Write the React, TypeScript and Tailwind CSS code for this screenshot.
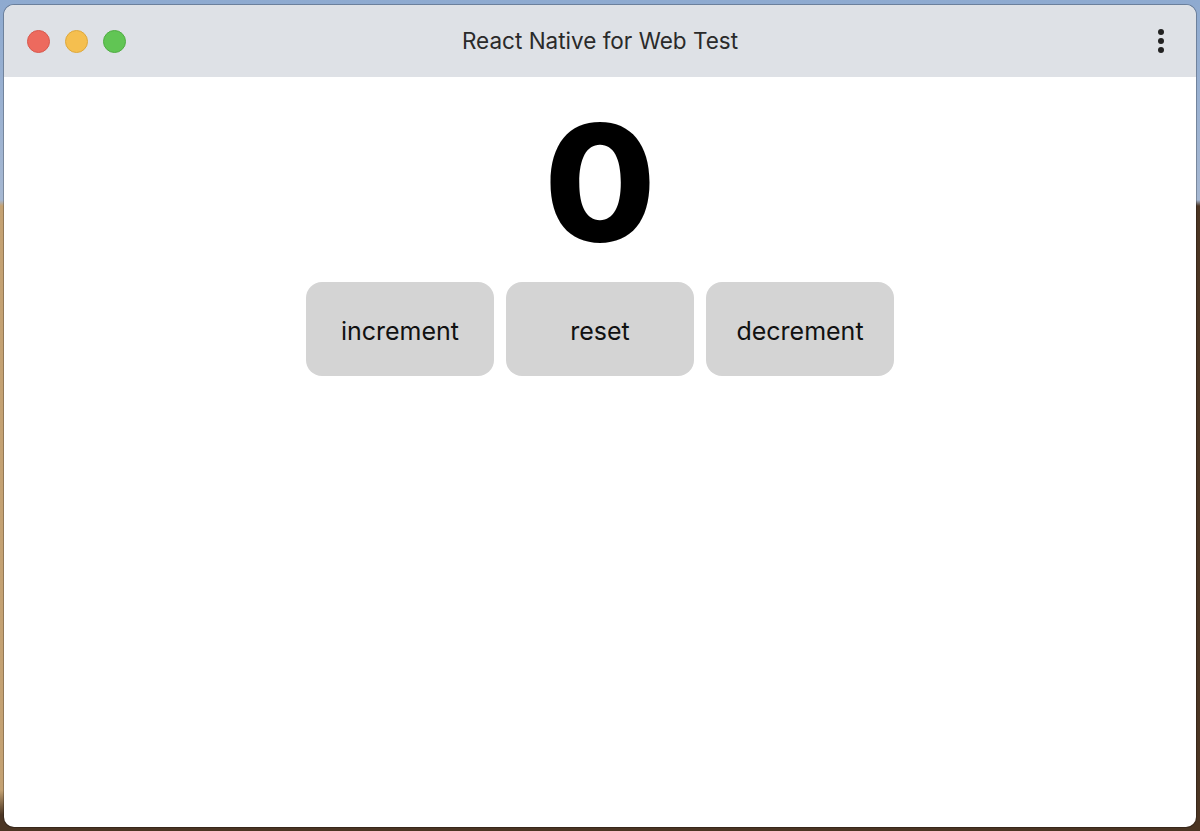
import React, { useState } from 'react';

const TrafficLights: React.FC = () => (
  <div className="flex items-center gap-[15px]">
    <span className="w-[23px] h-[23px] rounded-full bg-[#ed6a5e] border border-[#d8584d]" />
    <span className="w-[23px] h-[23px] rounded-full bg-[#f5bf4f] border border-[#dea83b]" />
    <span className="w-[23px] h-[23px] rounded-full bg-[#61c554] border border-[#50ad43]" />
  </div>
);

const CounterButton: React.FC<{ label: string; onPress: () => void }> = ({ label, onPress }) => (
  <button
    onClick={onPress}
    className="w-[188px] h-[94px] rounded-[16px] bg-[#d4d4d4] text-[25px] text-[#111] flex items-center justify-center pt-[5px]"
  >
    {label}
  </button>
);

export default function App() {
  const [count, setCount] = useState(0);

  return (
    <div className="w-[1200px] h-[831px] overflow-hidden pt-[5px] px-[4px] pb-[4px] bg-[linear-gradient(to_bottom,#8eaad0_0px,#a6b8d2_200px,transparent_206px,transparent_790px,#4b3523_815px),linear-gradient(to_right,#c4a273_0%,#8a6a48_40%,#4b3523_100%)]">
      <div className="h-full flex flex-col rounded-[10px] overflow-hidden bg-white shadow-[0_0_0_1px_rgba(0,0,0,0.25)]">
        {/* title bar */}
        <div className="h-[72px] shrink-0 bg-[#dee1e6] flex items-center justify-between px-[23px] relative">
          <TrafficLights />
          <div className="absolute inset-0 flex items-center justify-center pointer-events-none">
            <span className="text-[22.5px] text-[#2a2a2a] font-['Inter',sans-serif]">React Native for Web Test</span>
          </div>
          <div className="flex flex-col gap-[3px] mr-[9px]">
            <span className="w-[6px] h-[6px] rounded-full bg-[#222]" />
            <span className="w-[6px] h-[6px] rounded-full bg-[#222]" />
            <span className="w-[6px] h-[6px] rounded-full bg-[#222]" />
          </div>
        </div>

        {/* counter */}
        <div className="flex-1 flex flex-col items-center pt-[24px] font-['Inter',sans-serif]">
          <div className="text-[162px] leading-[162px] font-extrabold text-black">{count}</div>
          <div className="flex gap-[12px] mt-[19px]">
            <CounterButton label="increment" onPress={() => setCount(c => c + 1)} />
            <CounterButton label="reset" onPress={() => setCount(0)} />
            <CounterButton label="decrement" onPress={() => setCount(c => c - 1)} />
          </div>
        </div>
      </div>
    </div>
  );
}
